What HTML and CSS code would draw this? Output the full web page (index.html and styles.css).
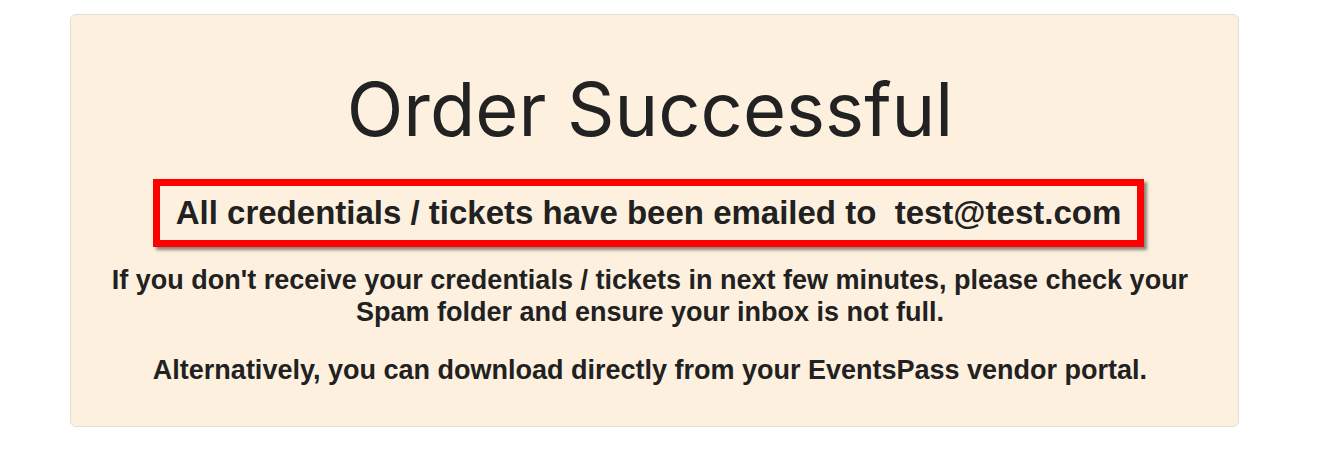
FILE: index.html
```html
<!DOCTYPE html>
<html lang="en">
<head>
<meta charset="utf-8">
<title>Order Successful</title>
<link rel="stylesheet" href="styles.css">
</head>
<body>
<div class="page">
  <div class="card">
    <h1 class="title">Order Successful</h1>
    <div class="notice">All credentials / tickets have been emailed to&nbsp; test@test.com</div>
    <p class="info">If you don't receive your credentials / tickets in next few minutes, please check your<br>Spam folder and ensure your inbox is not full.</p>
    <p class="info">Alternatively, you can download directly from your EventsPass vendor portal.</p>
  </div>
</div>
</body>
</html>
```
FILE: styles.css
```css
html, body {
  margin: 0;
  padding: 0;
  background: #ffffff;
}
.page {
  padding: 14px 0 0 70px;
}
.card {
  width: 1158px;
  height: 411px;
  padding-right: 9px;
  box-sizing: content-box;
  background: #fdf0de;
  border: 1px solid #e2ddd6;
  border-radius: 6px;
  display: flex;
  flex-direction: column;
  align-items: center;
  color: #212121;
}
.title {
  font-family: Inter, "Open Sans", sans-serif;
  font-weight: 400;
  font-size: 74px;
  line-height: 1;
  margin: 57px 0 0;
  color: #222;
}
.notice {
  margin-top: 33px;
  margin-left: -3px;
  border: 7px solid #ff0000;
  box-shadow: 3px 3px 3px rgba(0,0,0,0.45);
  padding: 7px 16px 8px;
  font-family: "Liberation Sans", Arial, sans-serif;
  font-weight: 700;
  font-size: 33px;
  line-height: 39px;
}
.info {
  margin: 17px 0 0;
  text-align: center;
  font-family: "Liberation Sans", Arial, sans-serif;
  font-weight: 700;
  font-size: 27px;
  line-height: 32px;
}
.info + .info {
  margin-top: 26px;
}
```
